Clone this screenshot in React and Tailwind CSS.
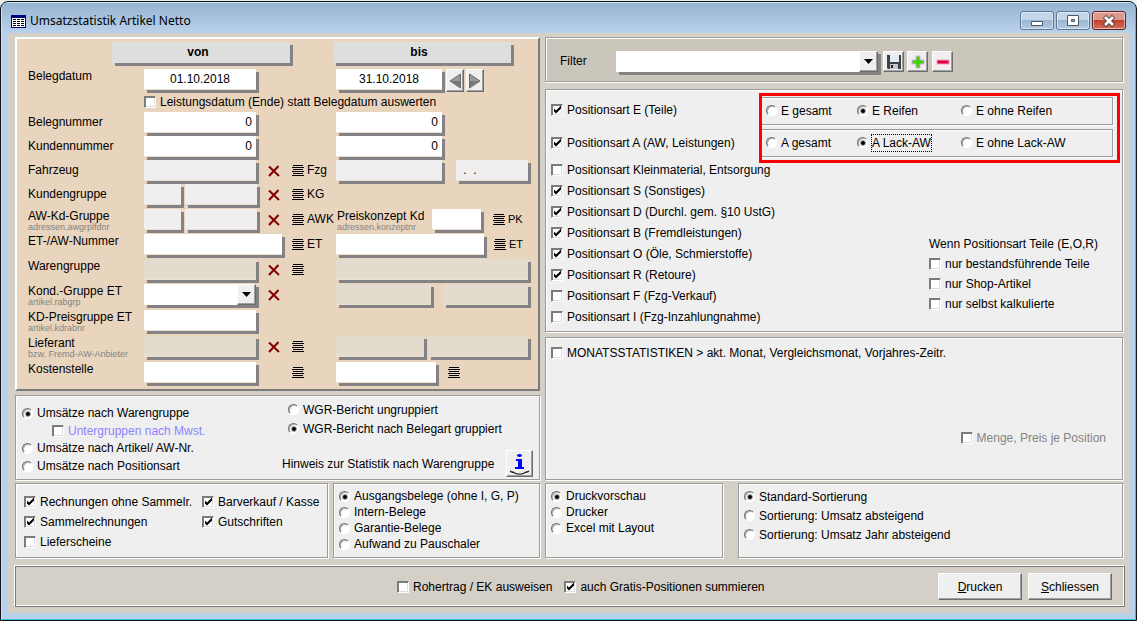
import React from "react";

const GROUP =
  "border border-[#9c9c9c] bg-[#efefef] shadow-[inset_1px_1px_0_#fff,1px_1px_0_#fff]";
const RAISED =
  "border border-t-white border-l-white border-r-[#6d6d6d] border-b-[#6d6d6d] bg-[#efefef] shadow-[inset_-1px_-1px_0_#a0a0a0]";

const Check = ({ label, checked, className = "", muted = "" }) => (
  <label className={`flex items-center gap-1 whitespace-nowrap ${className}`}>
    <span className="relative block size-3 shrink-0">
      <input
        type="checkbox"
        defaultChecked={checked}
        className="peer block size-3 appearance-none border border-t-[#7b7b7b] border-l-[#7b7b7b] border-r-white border-b-white bg-white shadow-[inset_1px_1px_0_#7b7b7b,inset_-1px_-1px_0_#dedede]"
      />
      <svg
        viewBox="0 0 12 12"
        className="pointer-events-none absolute inset-0 hidden size-3 peer-checked:block"
      >
        <path d="M3 4.5v3l2 2 5-5v-3l-5 5z" fill="#000" />
      </svg>
    </span>
    <span className={muted}>{label}</span>
  </label>
);

const Radio = ({ name, label, checked, focused, className = "" }) => (
  <label className={`flex items-center gap-1 whitespace-nowrap ${className}`}>
    <span className="relative block size-[11px] shrink-0">
      <input
        type="radio"
        name={name}
        defaultChecked={checked}
        className="peer block size-[11px] appearance-none rounded-full border border-t-[#6f6f6f] border-l-[#6f6f6f] border-r-white border-b-white bg-white shadow-[inset_1px_1px_0_#b0b0b0]"
      />
      <span className="pointer-events-none absolute top-1 left-1 hidden size-1 rounded-full bg-black outline outline-black/40 peer-checked:block" />
    </span>
    <span className={focused ? "outline outline-dotted outline-black" : ""}>
      {label}
    </span>
  </label>
);

const tones = {
  white: "bg-white",
  gray: "bg-[#efefef]",
  tan: "bg-[#e3dbcd]",
};

const Field = ({ label, tone = "white", className = "", value = "" }) => (
  <input
    type="text"
    aria-label={label}
    defaultValue={value}
    readOnly={tone !== "white"}
    className={`block h-[21px] shrink-0 border-b border-[#ece0d0] px-1 shadow-[3px_3px_0_#848284] outline-none ${tones[tone]} ${className}`}
  />
);

const Combo = ({ label, className = "" }) => (
  <span className={`relative block shadow-[3px_3px_0_#848284] ${className}`}>
    <select
      aria-label={label}
      className="block h-[21px] w-full appearance-none bg-white px-1 outline-none"
    >
      <option></option>
    </select>
    <span
      className={`pointer-events-none absolute top-0 right-0 flex h-[21px] w-[19px] items-center justify-center ${RAISED}`}
    >
      <svg viewBox="0 0 9 5" className="h-[5px] w-[9px]">
        <path d="M0 0h9L4.5 5z" fill="#000" />
      </svg>
    </span>
  </span>
);

const ListIcon = () => (
  <svg
    viewBox="0 0 12 11"
    className="h-[11px] w-3 shrink-0"
    shapeRendering="crispEdges"
  >
    <path
      d="M1 0h10v1H1zM0 2h12v1H0zM1 4h10v1H1zM0 6h12v1H0zM1 8h10v1H1zM0 10h12v1H0z"
      fill="#000"
    />
  </svg>
);

const LookupButton = ({ text, label, className = "" }) => (
  <button
    type="button"
    aria-label={label}
    className={`flex h-5 items-center gap-[3px] ${className}`}
  >
    <ListIcon />
    {text}
  </button>
);

const ClearButton = ({ label }) => (
  <button type="button" aria-label={label} className="flex h-[22px] items-center">
    <svg viewBox="0 0 12 12" className="size-3">
      <path
        d="M1 1.5L11 11M10.500 1L1 11"
        stroke="#840000"
        strokeWidth="2"
        fill="none"
      />
    </svg>
  </button>
);

const Caption = ({ label, sub, tight }) => (
  <div className="whitespace-nowrap">
    <div className={tight ? "leading-[15px]" : "leading-5"}>{label}</div>
    {sub && <div className="text-[9px] leading-[7px] text-[#848484]">{sub}</div>}
  </div>
);

// one line of the selection form: caption, "von", clear, lookup, "bis"
const FormRow = ({ label, sub, tight, height, from, clear, lookup, children }) => (
  <div
    className={`grid grid-cols-[116px_124px_24px_44px_1fr] items-start ${height}`}
  >
    <Caption label={label} sub={sub} tight={tight} />
    <div className="flex gap-1">{from}</div>
    <div>{clear && <ClearButton label={`${label} löschen`} />}</div>
    <div>
      {lookup !== undefined && (
        <LookupButton text={lookup} label={`${label} auswählen`} />
      )}
    </div>
    <div className="flex items-start">{children}</div>
  </div>
);

const SelectionForm = () => (
  <section className="border-2 border-t-white border-l-white border-r-[#7b7b7b] border-b-[#7b7b7b] bg-[#e9d5bd] pt-[3px] pb-[3px] pl-[11px]">
    <div className="grid grid-cols-[221px_1fr] pl-[84px] text-center font-bold leading-5">
      <h2 className="h-[27px]">
        <span className="block h-[21px] w-[178px] bg-[#dedede] pr-1.5 shadow-[3px_3px_0_#848284]">
          von
        </span>
      </h2>
      <h2>
        <span className="block h-[21px] w-[178px] bg-[#dedede] pr-1.5 shadow-[3px_3px_0_#848284]">
          bis
        </span>
      </h2>
    </div>
    <FormRow
      label="Belegdatum"
      tight
      height="h-[25px]"
      from={
        <Field
          label="Belegdatum von"
          value="01.10.2018"
          className="w-28 text-center"
        />
      }
    >
      <Field
        label="Belegdatum bis"
        value="31.10.2018"
        className="w-[106px] text-center"
      />
      <button
        type="button"
        aria-label="Monat zurück"
        className={`ml-1 flex h-[23px] w-[18px] items-center justify-center ${RAISED}`}
      >
        <svg viewBox="0 0 12 16" className="h-4 w-3">
          <path d="M11.500 1v14L1 8z" fill="#9a9a9a" stroke="#6b6b6b" />
          <path d="M1 8h10v6z" fill="#777" />
        </svg>
      </button>
      <button
        type="button"
        aria-label="Monat vor"
        className={`ml-0.5 flex h-[23px] w-[18px] items-center justify-center ${RAISED}`}
      >
        <svg viewBox="0 0 12 16" className="h-4 w-3">
          <path d="M.5 1v14L11 8z" fill="#9a9a9a" stroke="#6b6b6b" />
          <path d="M11 8H1v6z" fill="#777" />
        </svg>
      </button>
    </FormRow>
    <Check
      label="Leistungsdatum (Ende) statt Belegdatum auswerten"
      className="ml-[116px] h-[18px] pb-0.5"
    />
    <FormRow
      label="Belegnummer"
      height="h-6"
      from={
        <Field label="Belegnummer von" value="0" className="w-28 text-right" />
      }
    >
      <Field
        label="Belegnummer bis"
        value="0"
        className="w-[106px] text-right"
      />
    </FormRow>
    <FormRow
      label="Kundennummer"
      height="h-6"
      from={
        <Field label="Kundennummer von" value="0" className="w-28 text-right" />
      }
    >
      <Field
        label="Kundennummer bis"
        value="0"
        className="w-[106px] text-right"
      />
    </FormRow>
    <FormRow
      label="Fahrzeug"
      height="h-6"
      clear
      lookup="Fzg"
      from={<Field label="Fahrzeug von" tone="gray" className="w-28" />}
    >
      <Field label="Fahrzeug bis" tone="gray" className="w-[106px]" />
      <Field
        label="Fahrzeug Datum"
        tone="gray"
        value=" .  ."
        className="ml-3.5 w-[72px]"
      />
    </FormRow>
    <FormRow
      label="Kundengruppe"
      height="h-[25px]"
      clear
      lookup="KG"
      from={
        <>
          <Field label="Kundengruppe" tone="gray" className="w-[37px]" />
          <Field label="Kundengruppe Name" tone="gray" className="w-[72px]" />
        </>
      }
    />
    <FormRow
      label="AW-Kd-Gruppe"
      sub="adressen.awgrplfdnr"
      tight
      height="h-[25px]"
      clear
      lookup="AWK"
      from={
        <>
          <Field label="AW-Kd-Gruppe" tone="gray" className="w-[37px]" />
          <Field label="AW-Kd-Gruppe Name" tone="gray" className="w-[72px]" />
        </>
      }
    >
      <div className="w-24 pl-px">
        <Caption label="Preiskonzept Kd" sub="adressen.konzeptnr" tight />
      </div>
      <Field label="Preiskonzept Kd" className="w-[49px]" />
      <LookupButton
        text="PK"
        label="Preiskonzept auswählen"
        className="ml-3 text-[11px]"
      />
    </FormRow>
    <FormRow
      label="ET-/AW-Nummer"
      tight
      height="h-[25px]"
      lookup="ET"
      from={<Field label="ET-/AW-Nummer von" className="w-[138px]" />}
    >
      <Field label="ET-/AW-Nummer bis" className="w-[148px]" />
      <LookupButton
        text="ET"
        label="ET-/AW-Nummer bis auswählen"
        className="ml-2.5 text-[11px]"
      />
    </FormRow>
    <FormRow
      label="Warengruppe"
      tight
      height="h-[25px]"
      clear
      lookup=""
      from={<Field label="Warengruppe" tone="tan" className="w-28" />}
    >
      <Field label="Warengruppe Name" tone="tan" className="w-48" />
    </FormRow>
    <FormRow
      label="Kond.-Gruppe ET"
      sub="artikel.rabgrp"
      tight
      height="h-[26px]"
      clear
      from={<Combo label="Kond.-Gruppe ET" className="w-28" />}
    >
      <Field label="Kond.-Gruppe Info" tone="tan" className="w-[95px]" />
      <Field label="Kond.-Gruppe Info 2" tone="tan" className="ml-3 w-[85px]" />
    </FormRow>
    <FormRow
      label="KD-Preisgruppe ET"
      sub="artikel.kdrabnr"
      tight
      height="h-[26px]"
      from={<Field label="KD-Preisgruppe ET" className="w-28" />}
    />
    <FormRow
      label="Lieferant"
      sub="bzw. Fremd-AW-Anbieter"
      tight
      height="h-[26px]"
      clear
      lookup=""
      from={<Field label="Lieferant" tone="tan" className="w-28" />}
    >
      <Field label="Lieferant Name" tone="tan" className="w-[88px]" />
      <Field label="Lieferant Ort" tone="tan" className="ml-1 w-[100px]" />
    </FormRow>
    <FormRow
      label="Kostenstelle"
      tight
      height="h-6"
      lookup=""
      from={<Field label="Kostenstelle von" className="w-28" />}
    >
      <Field label="Kostenstelle bis" className="w-[100px]" />
      <LookupButton label="Kostenstelle bis auswählen" className="ml-3" />
    </FormRow>
  </section>
);

const ReportType = () => (
  <section className={`grid flex-1 grid-cols-[259px_1fr] pb-0.5 ${GROUP}`}>
    <div className="pt-2 pl-1.5">
      <Radio name="umsatz" label="Umsätze nach Warengruppe" checked className="h-[18px]" />
      <Check
        label="Untergruppen nach Mwst."
        muted="text-[#8c84ff]"
        className="ml-[30px] h-[17px]"
      />
      <Radio name="umsatz" label="Umsätze nach Artikel/ AW-Nr." className="h-[18px]" />
      <Radio name="umsatz" label="Umsätze nach Positionsart" className="h-[18px]" />
    </div>
    <div className="pt-1">
      <Radio name="wgr" label="WGR-Bericht ungruppiert" className="ml-[13px] h-[19px]" />
      <Radio
        name="wgr"
        label="WGR-Bericht nach Belegart gruppiert"
        checked
        className="ml-[13px] h-[19px]"
      />
      <div className="mt-3 flex items-center justify-between pr-1.5 pl-[7px]">
        <span className="whitespace-nowrap">
          Hinweis zur Statistik nach Warengruppe
        </span>
        <button
          type="button"
          aria-label="Info"
          className={`flex size-[27px] items-center justify-center ${RAISED}`}
        >
          <svg viewBox="0 0 23 24" className="h-6 w-[23px]">
            <path
              d="M9 3q2.500-2 5 0v1q-2.500 2-5 0zM8 7h6v8h2v2H7v-2h3V9H8z"
              fill="#00f"
            />
            <path d="M1 18l7 2.500H5zM22 18l-7 2.500h3z" fill="#444" />
            <path d="M2 19.500q5 1.500 7 2.500h5q3-1.500 7-2.500" stroke="#000" fill="none" />
          </svg>
        </button>
      </div>
    </div>
  </section>
);

const FilterBar = () => (
  <section
    className={`flex h-[45px] items-center pr-[169px] pb-0.5 pl-3.5 ${GROUP} !bg-[#cac6bc]`}
  >
    <span className="w-14 pt-1">Filter</span>
    <Combo label="Filter" className="mt-1.5 flex-1" />
    <div className="mt-1.5 ml-[5px] flex gap-[3px]">
      <button
        type="button"
        aria-label="Filter speichern"
        className={`flex size-[21px] items-center justify-center ${RAISED}`}
      >
        <svg viewBox="0 0 16 16" className="size-4">
          <path d="M1 1h14v14H2l-1-1z" fill="#39424d" />
          <path d="M4 1h9v7H4z" fill="#e4ebf2" />
          <path d="M4 10h8v5H4z" fill="#c3c7cc" />
          <path d="M5 11h2v3H5z" fill="#222" />
        </svg>
      </button>
      <button
        type="button"
        aria-label="Filter hinzufügen"
        className={`flex size-[21px] items-center justify-center ${RAISED}`}
      >
        <svg viewBox="0 0 14 14" className="size-3.5">
          <path
            d="M5 1h4v4h4v4H9v4H5V9H1V5h4z"
            fill="#3fd400"
            stroke="#d9a8e8"
          />
        </svg>
      </button>
      <button
        type="button"
        aria-label="Filter entfernen"
        className={`ml-px flex size-[21px] items-center justify-center ${RAISED}`}
      >
        <svg viewBox="0 0 14 14" className="size-3.5">
          <path d="M1 5h12v4H1z" fill="#e3003c" stroke="#f0a0c0" />
        </svg>
      </button>
    </div>
  </section>
);

const positions = [
  ["Positionsart E (Teile)", true, "h-[34px]"],
  ["Positionsart A (AW, Leistungen)", true, "h-8"],
  ["Positionsart Kleinmaterial, Entsorgung", false, "h-[21px]"],
  ["Positionsart S (Sonstiges)", true, "h-[21px]"],
  ["Positionsart D (Durchl. gem. §10 UstG)", true, "h-[21px]"],
  ["Positionsart B (Fremdleistungen)", true, "h-[21px]"],
  ["Positionsart O (Öle, Schmierstoffe)", true, "h-[21px]"],
  ["Positionsart R (Retoure)", true, "h-[21px]"],
  ["Positionsart F (Fzg-Verkauf)", false, "h-[21px]"],
  ["Positionsart I (Fzg-Inzahlungnahme)", false, "h-[21px]"],
];

const SUBGROUP =
  "grid h-7 grid-cols-[91px_104px_1fr] items-center border border-l-0 border-[#9c9c9c] pb-px pl-1 shadow-[inset_0_1px_0_#fff,1px_1px_0_#fff]";

const PositionTypes = () => (
  <section
    className={`grid grid-cols-[213px_1fr] pt-[3px] pr-0.5 pb-1 ${GROUP}`}
  >
    <div className="pl-[5px]">
      {positions.map(([label, checked, height]) => (
        <Check key={label} label={label} checked={checked} className={height} />
      ))}
    </div>
    <div>
      <div className="space-y-1 border-3 border-[#ff0000] pt-px pr-1 pb-[3px]">
        <div className={SUBGROUP}>
          <Radio name="e" label="E gesamt" />
          <Radio name="e" label="E Reifen" checked />
          <Radio name="e" label="E ohne Reifen" />
        </div>
        <div className={SUBGROUP}>
          <Radio name="a" label="A gesamt" />
          <Radio name="a" label="A Lack-AW" checked focused />
          <Radio name="a" label="E ohne Lack-AW" />
        </div>
      </div>
      <div className="mt-[71px] ml-[170px]">
        <div className="h-5 leading-5 whitespace-nowrap">
          Wenn Positionsart Teile (E,O,R)
        </div>
        <Check label="nur bestandsführende Teile" className="h-5" />
        <Check label="nur Shop-Artikel" className="h-5" />
        <Check label="nur selbst kalkulierte" className="h-5" />
      </div>
    </div>
  </section>
);

const MonthStats = () => (
  <section
    className={`flex flex-1 flex-col justify-between pt-[5px] pr-4 pb-[33px] pl-[5px] ${GROUP}`}
  >
    <Check
      label="MONATSSTATISTIKEN > akt. Monat, Vergleichsmonat, Vorjahres-Zeitr."
      className="h-5"
    />
    <Check
      label="Menge, Preis je Position"
      muted="text-[#848484]"
      className="h-4 self-end"
    />
  </section>
);

const TitleButton = ({ label, close, children }) => (
  <button
    type="button"
    aria-label={label}
    className={`flex h-[19px] w-[34px] items-center justify-center rounded-[3px] border shadow-[inset_0_0_0_1px_rgba(255,255,255,0.5)] ${
      close
        ? "border-[#5b2020] bg-linear-to-b from-[#dd9a8c] from-45% via-[#c0412c] via-50% to-[#d0705c]"
        : "border-[#5f7690] bg-linear-to-b from-[#c3d6ea] from-45% via-[#9ab5d2] via-50% to-[#b4cbe2]"
    }`}
  >
    {children}
  </button>
);

const TitleBar = () => (
  <header className="flex h-[30px] items-start justify-between bg-linear-to-b from-[#98b4d2] to-[#b9d1ea] pt-2 pr-[9px] pl-[9px]">
    <h1 className="flex items-center gap-1 pt-0.5 font-['Noto_Sans',sans-serif] text-[12px] leading-4">
      <svg viewBox="0 0 15 13" className="h-[13px] w-[15px]">
        <path d="M0 0h15v13H0z" fill="#000084" />
        <path d="M1 3h13v9H1z" fill="#fff" />
        <path
          d="M2 4h3v1H2zM6 4h3v1H6zM10 4h3v1h-3zM2 6h3v1H2zM6 6h3v1H6zM10 6h3v1h-3zM2 8h3v1H2zM6 8h3v1H6zM10 8h3v1h-3zM2 10h3v1H2zM6 10h3v1H6zM10 10h3v1h-3z"
          fill="#000"
        />
      </svg>
      Umsatzstatistik Artikel Netto
    </h1>
    <div className="flex gap-0.5">
      <TitleButton label="Minimieren">
        <svg viewBox="0 0 14 12" className="h-3 w-3.5">
          <path d="M1.500 6.500h11v4h-11z" fill="#fff" stroke="#4a5866" />
        </svg>
      </TitleButton>
      <TitleButton label="Maximieren">
        <svg viewBox="0 0 14 12" className="h-3 w-3.5">
          <path d="M1.500.5h11v10h-11z" fill="#fff" stroke="#4a5866" />
          <path d="M5.500 4.500h3v2h-3z" fill="#9ab5d2" stroke="#4a5866" />
        </svg>
      </TitleButton>
      <TitleButton label="Schließen" close>
        <svg viewBox="0 0 14 12" className="h-3 w-3.5">
          <path d="M2.500 1.500l9 9M11.500 1.500l-9 9" stroke="#4a3434" strokeWidth="4.500" />
          <path d="M3 2l8 8M11 2l-8 8" stroke="#fff" strokeWidth="2.800" />
        </svg>
      </TitleButton>
    </div>
  </header>
);

const FooterBar = () => (
  <footer className="mt-2 flex h-[41px] items-center border border-[#7b7b7b] pr-3 shadow-[inset_-1px_-1px_0_#fff,-1px_-1px_0_#fff]">
    <div className="flex flex-1 gap-3 pl-[381px]">
      <Check label="Rohertrag / EK ausweisen" />
      <Check label="auch Gratis-Positionen summieren" checked />
    </div>
    <div className="flex gap-1.5">
      <button type="button" className={`h-[27px] w-[84px] ${RAISED}`}>
        <u>D</u>rucken
      </button>
      <button type="button" className={`h-[27px] w-[84px] ${RAISED}`}>
        <u>S</u>chliessen
      </button>
    </div>
  </footer>
);

export default function App() {
  return (
    <div className="flex min-h-screen flex-col bg-[#e8eeea] pt-px font-['Liberation_Sans',Arial,sans-serif] text-[12px] leading-4 text-black">
      <div className="flex flex-1 flex-col overflow-hidden rounded-t-lg border border-[#101418] bg-[#b9d1ea] shadow-[inset_0_0_0_1px_#35c4dc]">
        <div className="flex flex-1 flex-col rounded-t-lg border border-white/70 border-r-[#35c4dc] border-b-[#35c4dc]">
          <TitleBar />
          <main className="mx-1.5 mb-1.5 flex flex-1 flex-col bg-[#d4cfc7] pt-1 pr-1 pl-[7px]">
            <div className="grid grid-cols-[525fr_578fr] gap-x-[5px] pr-0.5">
              <div className="flex flex-col gap-1">
                <SelectionForm />
                <ReportType />
              </div>
              <div className="flex flex-col">
                <FilterBar />
                <div className="mt-[7px] mb-[5px]">
                  <PositionTypes />
                </div>
                <MonthStats />
              </div>
              <div className="mt-[3px] grid grid-cols-[313fr_207fr] gap-[5px]">
                <section
                  className={`grid h-[75px] grid-cols-[178px_1fr] content-start pt-2 pl-2 ${GROUP}`}
                >
                  <Check label="Rechnungen ohne Sammelr." checked className="h-5" />
                  <Check label="Barverkauf / Kasse" checked className="h-5" />
                  <Check label="Sammelrechnungen" checked className="h-5" />
                  <Check label="Gutschriften" checked className="h-5" />
                  <Check label="Lieferscheine" className="h-5" />
                </section>
                <section className={`pt-1 pl-[5px] ${GROUP}`}>
                  <Radio name="beleg" label="Ausgangsbelege (ohne I, G, P)" checked className="h-4" />
                  <Radio name="beleg" label="Intern-Belege" className="h-4" />
                  <Radio name="beleg" label="Garantie-Belege" className="h-4" />
                  <Radio name="beleg" label="Aufwand zu Pauschaler" className="h-4" />
                </section>
              </div>
              <div className="mt-[3px] grid grid-cols-[178fr_385fr] gap-[15px]">
                <section className={`pt-1 pl-[5px] ${GROUP}`}>
                  <Radio name="ziel" label="Druckvorschau" checked className="h-4" />
                  <Radio name="ziel" label="Drucker" className="h-4" />
                  <Radio name="ziel" label="Excel mit Layout" className="h-4" />
                </section>
                <section className={`pt-[3px] pl-[5px] ${GROUP}`}>
                  <Radio name="sort" label="Standard-Sortierung" checked className="h-[19px]" />
                  <Radio name="sort" label="Sortierung: Umsatz absteigend" className="h-[19px]" />
                  <Radio name="sort" label="Sortierung: Umsatz Jahr absteigend" className="h-[19px]" />
                </section>
              </div>
            </div>
            <FooterBar />
          </main>
        </div>
      </div>
    </div>
  );
}
